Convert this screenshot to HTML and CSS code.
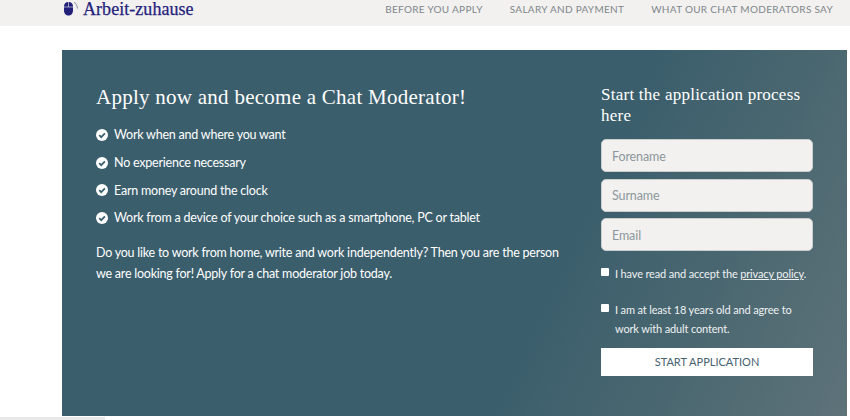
FILE: index.html
```html
<!DOCTYPE html>
<html lang="en">
<head>
<meta charset="utf-8">
<title>Arbeit-zuhause</title>
<link rel="stylesheet" href="styles.css">
</head>
<body>
<header class="topbar">
  <a class="logo" href="#">
    <svg class="logo-icon" width="16" height="16" viewBox="0 0 16 16" aria-hidden="true">
      <path d="M1 5.500C1 2.500 2.600 1 5.500 1S10 2.500 10 5.500v4C10 12.500 8 14.500 5.500 14.500S1 12.500 1 9.500z" fill="#22207a"/>
      <path d="M1 6h9" stroke="#f2f1ef" stroke-width=".6"/>
      <path d="M5.500 1v5" stroke="#f2f1ef" stroke-width=".6"/>
      <path d="M11 1.500c2 .4 3 2.700 3.500 6" stroke="#8d8da8" stroke-width="1" fill="none"/>
    </svg>
    <span>Arbeit-zuhause</span>
  </a>
  <nav class="nav">
    <a href="#">BEFORE YOU APPLY</a>
    <a href="#">SALARY AND PAYMENT</a>
    <a href="#">WHAT OUR CHAT MODERATORS SAY</a>
  </nav>
</header>
<main class="panel">
  <section class="intro">
    <h1>Apply now and become a Chat Moderator!</h1>
    <ul class="checks">
      <li><svg class="check" viewBox="0 0 12 12" aria-hidden="true"><circle cx="6" cy="6" r="6" fill="#fff"/><path d="M3.200 6.200 5.200 8.200 8.900 4.300" fill="none" stroke="#3b5e6c" stroke-width="1.700"/></svg>Work when and where you want</li>
      <li><svg class="check" viewBox="0 0 12 12" aria-hidden="true"><circle cx="6" cy="6" r="6" fill="#fff"/><path d="M3.200 6.200 5.200 8.200 8.900 4.300" fill="none" stroke="#3b5e6c" stroke-width="1.700"/></svg>No experience necessary</li>
      <li><svg class="check" viewBox="0 0 12 12" aria-hidden="true"><circle cx="6" cy="6" r="6" fill="#fff"/><path d="M3.200 6.200 5.200 8.200 8.900 4.300" fill="none" stroke="#3b5e6c" stroke-width="1.700"/></svg>Earn money around the clock</li>
      <li><svg class="check" viewBox="0 0 12 12" aria-hidden="true"><circle cx="6" cy="6" r="6" fill="#fff"/><path d="M3.200 6.200 5.200 8.200 8.900 4.300" fill="none" stroke="#3b5e6c" stroke-width="1.700"/></svg>Work from a device of your choice such as a smartphone, PC or tablet</li>
    </ul>
    <p class="lead">Do you like to work from home, write and work independently? Then you are the person we are looking for! Apply for a chat moderator job today.</p>
  </section>
  <form class="apply">
    <h2>Start the application process here</h2>
    <input class="field" type="text" placeholder="Forename">
    <input class="field" type="text" placeholder="Surname">
    <input class="field" type="email" placeholder="Email">
    <label class="consent first"><span class="box"></span><span>I have read and accept the <a href="#">privacy policy</a>.</span></label>
    <label class="consent"><span class="box"></span><span>I am at least 18 years old and agree to work with adult content.</span></label>
    <button class="submit" type="button">START APPLICATION</button>
  </form>
</main>
<div class="scrollthumb"></div>
</body>
</html>
```
FILE: styles.css
```css
* { box-sizing: border-box; }
html, body { height: 420px; overflow: hidden; }
body {
  margin: 0;
  background: #fff;
  font-family: Lato, "Liberation Sans", sans-serif;
  color: #fff;
}
.topbar {
  height: 26px;
  background: #f2f1ef;
  display: flex;
  justify-content: space-between;
  align-items: center;
  padding: 0 17px 8px 63px;
}
.logo {
  display: flex;
  align-items: center;
  gap: 4px;
  color: #25237c;
  text-decoration: none;
  font-family: "Liberation Serif", serif;
  font-size: 18px;
  line-height: 20px;
}
.logo span { letter-spacing: .05px; -webkit-text-stroke: .25px #25237c; }
.nav { display: flex; gap: 27px; }
.nav a {
  color: #80878b;
  text-decoration: none;
  font-size: 10px;
  letter-spacing: .3px;
}
.panel {
  margin: 24px 3px 0 62px;
  height: 366px;
  padding: 32px 34px 0;
  display: flex;
  justify-content: space-between;
  background: linear-gradient(115deg, #3b5e6c 0%, #3b5e6c 62%, #46656f 76%, #5e7279 100%);
}
.intro { width: 470px; }
h1 {
  margin: 0;
  font-family: "Liberation Serif", serif;
  font-weight: 400;
  font-size: 21px;
  line-height: 30px;
  letter-spacing: .26px;
}
.checks { list-style: none; margin: 9px 0 0; padding: 0; }
.checks li {
  display: flex;
  align-items: center;
  gap: 6px;
  height: 27.700px;
  font-size: 12.500px;
  letter-spacing: -.22px;
}
.check { width: 12px; height: 12px; flex: none; }
.lead {
  margin: 10px 0 0;
  font-size: 12.500px;
  line-height: 21px;
  letter-spacing: -.23px;
}
.apply { width: 212px; display: flex; flex-direction: column; padding-top: 2px; }
h2 {
  margin: 0 0 13px;
  font-family: "Liberation Serif", serif;
  font-weight: 400;
  font-size: 17px;
  line-height: 21px;
  letter-spacing: .25px;
}
.field {
  width: 100%;
  height: 33px;
  margin-bottom: 6.500px;
  padding: 1px 10px 0;
  border: 1px solid #c9cdce;
  border-radius: 5px;
  background: #f2f1ef;
  font-family: inherit;
  font-size: 12.500px;
  letter-spacing: -.1px;
  color: #333;
}
.field::placeholder { color: #8c979c; opacity: 1; }
.consent {
  display: flex;
  gap: 6px;
  font-size: 11px;
  line-height: 19px;
  letter-spacing: -.15px;
  color: #eef1f2;
}
.consent.first { margin: 6px 0 17px; }
.consent a { color: inherit; }
.box {
  width: 8px;
  height: 8px;
  flex: none;
  margin-top: 4px;
  background: #fff;
  border-radius: 1px;
}
.submit {
  height: 28px;
  margin-top: 10px;
  border: 0;
  background: #fff;
  color: #47626f;
  font-family: inherit;
  font-size: 11px;
}
.scrollthumb {
  position: fixed;
  left: 0;
  bottom: 0;
  width: 105px;
  height: 3px;
  background: #e8e8e8;
}
```
